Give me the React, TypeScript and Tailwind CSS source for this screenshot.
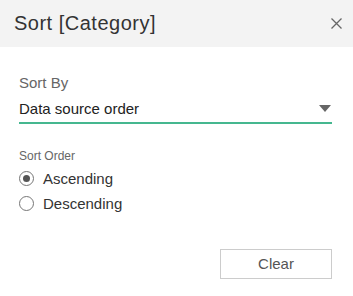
import React, { useState } from 'react';

const options = ['Ascending', 'Descending'];

const Radio: React.FC<{ label: string; checked: boolean; onClick: () => void }> = ({ label, checked, onClick }) => (
  <button type="button" onClick={onClick} className="flex items-center h-[25px] text-left">
    <span className="w-[15px] h-[15px] rounded-full border border-[#767676] flex items-center justify-center bg-white">
      {checked && <span className="w-[7px] h-[7px] rounded-full bg-[#555]" />}
    </span>
    <span className="ml-[9px] text-[15px] leading-[18px] text-[#333]">{label}</span>
  </button>
);

export default function App() {
  const [order, setOrder] = useState('Ascending');

  return (
    <div className="w-[353px] h-[296px] bg-white flex flex-col font-['Liberation_Sans',Arial,sans-serif]">
      <div className="h-[47px] bg-[#f3f3f3] flex items-center justify-between pl-[14px] pr-[11px]">
        <h1 className="text-[20px] leading-[24px] tracking-[0.5px] text-[#333] mt-[-1px]">Sort [Category]</h1>
        <button type="button" aria-label="Close" className="w-[11px] h-[11px]">
          <svg width="11" height="11" viewBox="0 0 11 11">
            <path d="M0.5 0.5 L10.5 10.5 M10.5 0.5 L0.5 10.5" stroke="#666" strokeWidth="1.3" />
          </svg>
        </button>
      </div>

      <div className="flex flex-col px-[19px] pr-[21px] flex-1">
        <label className="mt-[27px] text-[15px] leading-[18px] text-[#666]">Sort By</label>
        <div className="mt-[6px] flex items-center justify-between h-[26px] pb-[3px] border-b-2 border-[#45b78f]">
          <span className="text-[15px] leading-[18px] text-[#222]">Data source order</span>
          <svg width="12" height="7" viewBox="0 0 12 7" className="mr-[1px]">
            <path d="M0 0 H12 L6 7 Z" fill="#666" />
          </svg>
        </div>

        <div className="mt-[25px] text-[12px] leading-[14px] text-[#666]">Sort Order</div>
        <div className="mt-[3px] flex flex-col">
          {options.map((o) => (
            <Radio key={o} label={o} checked={order === o} onClick={() => setOrder(o)} />
          ))}
        </div>

        <div className="mt-auto mb-[17px] flex justify-end">
          <button
            type="button"
            className="w-[112px] h-[30px] border border-[#cccccc] bg-white text-[15px] text-[#555]"
          >
            Clear
          </button>
        </div>
      </div>
    </div>
  );
}
